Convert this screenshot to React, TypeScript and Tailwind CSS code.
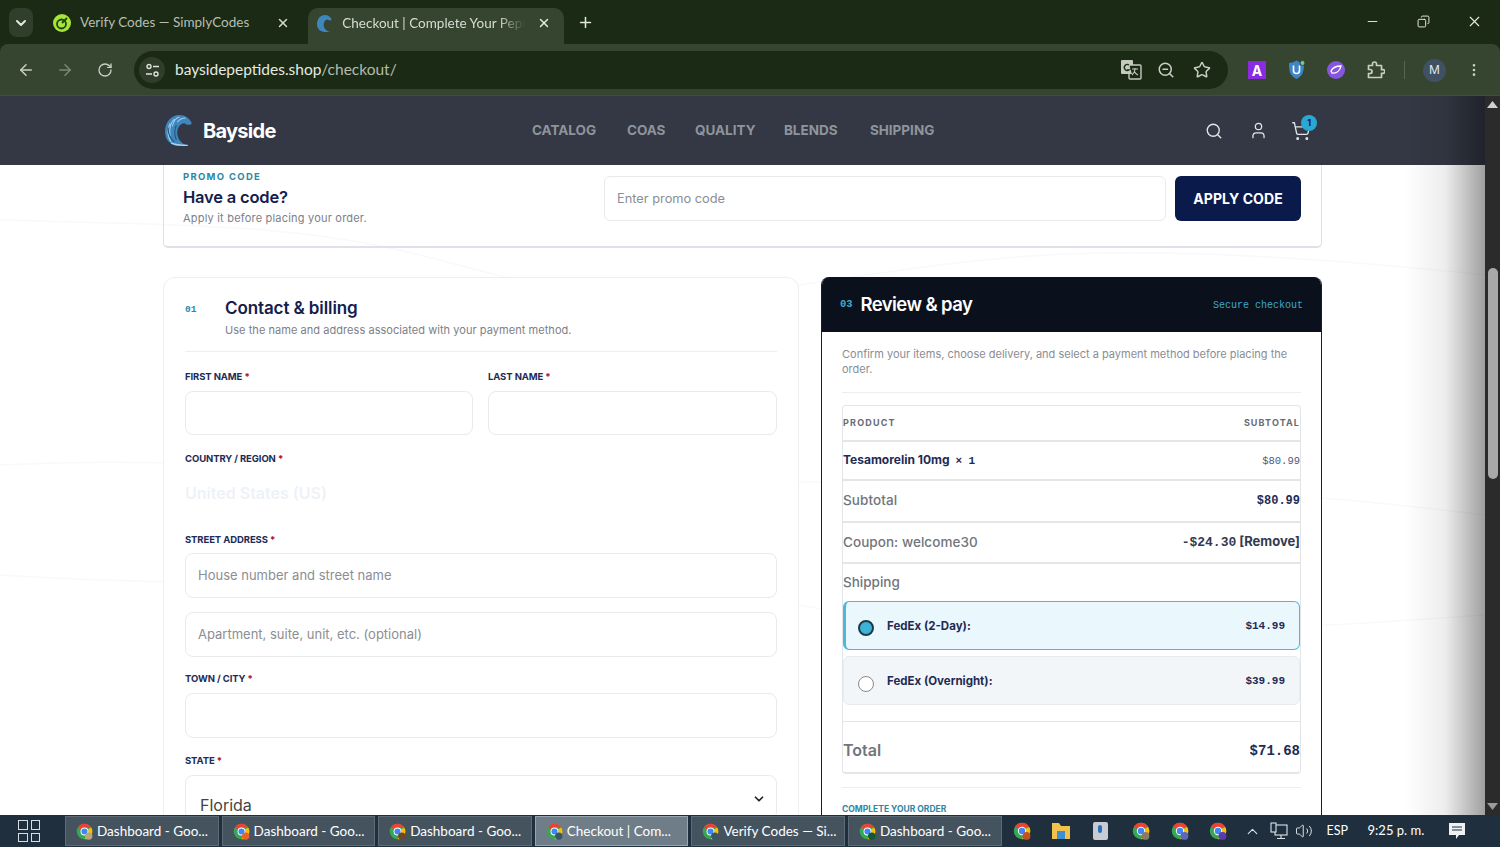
import React from "react";
import { ArrowLeft, ArrowRight, RotateCw, Search, Star, MoreVertical, X, Plus, ChevronDown, Minus, User, ShoppingCart, ChevronUp, Volume2, Copy, ZoomOut } from "lucide-react";

function ChromeIcon({ badge, size = 18 }: { badge: string; size?: number }) {
  return (
    <svg width={size} height={size} viewBox="0 0 24 24" className="shrink-0">
      <circle cx="12" cy="12" r="11" fill="#34a853" />
      <path d="M12 1a11 11 0 0 1 9.530 5.500H12a5.500 5.500 0 0 0-4.760 2.750L2.470 6.500A11 11 0 0 1 12 1z" fill="#ea4335" />
      <path d="M21.530 6.500A11 11 0 0 1 12 23l4.760-8.250A5.500 5.500 0 0 0 16.760 9.250z" fill="#fbbc04" />
      <circle cx="12" cy="12" r="5.600" fill="#fff" />
      <circle cx="12" cy="12" r="4.300" fill="#4285f4" />
      <circle cx="18" cy="18.500" r="5.200" fill={badge} />
    </svg>
  );
}

function WaveLogo({ size = 30, detail = true }: { size?: number; detail?: boolean }) {
  return (
    <svg width={size * 0.9} height={size} viewBox="0 0 27 30" className="shrink-0">
      <path d="M14 0C6 0 0 7 0 16c0 8 5 14 14 14h9c-8-2-12-8-11-15 1-5 4-7 7-7 2 2 6 2 7 0C24 3 19 0 14 0z" fill="#3f86bd" />
      {detail && (
        <g fill="none">
          <path d="M5 8c-3 5-3 13 1 18M9 4C5 8 4 14 5 20M14 2c-4 1-6 5-7 9M20 3c-3 0-6 1-8 4" stroke="#9fd0ee" strokeWidth="1" />
          <path d="M3 12c0 6 2 11 6 14M11 10c-2 4-2 10 0 14" stroke="#24507a" strokeWidth="1" />
          <path d="M6 27c4 2.500 10 2.500 16 2.500" stroke="#a9d4ee" strokeWidth="1.200" />
        </g>
      )}
    </svg>
  );
}

function Label({ text }: { text: string }) {
  return (
    <div className="h-[14px] text-[9.5px] leading-[14px] font-bold text-[#1d2b55] tracking-[-0.1px] uppercase">
      {text} <span className="text-[#b3122e]">*</span>
    </div>
  );
}

function Field({ placeholder, className }: { placeholder?: string; className: string }) {
  return (
    <div className={"flex items-center rounded-lg border border-[#e8eaee] bg-white pl-[12px] text-[13px] text-[#8b8e93] " + className}>
      {placeholder}
    </div>
  );
}

function TaskButton({ title, badge, active }: { title: string; badge: string; active?: boolean }) {
  return (
    <div className={active
      ? "flex h-[30px] w-[153.6px] items-center gap-[4px] border border-[#9aa6af] bg-[#6f7d88] pl-[10px] text-[13.5px] whitespace-nowrap text-white"
      : "flex h-[30px] w-[153.6px] items-center gap-[4px] border border-[#5d6b77] bg-[#45535f] pl-[10px] text-[13.5px] whitespace-nowrap text-white"}>
      <ChromeIcon badge={badge} size={17} />
      <span>{title}</span>
    </div>
  );
}

export default function App() {
  return (
    <div className="flex h-[847px] w-[1500px] flex-col overflow-hidden bg-[#1a2a15] font-['Inter',sans-serif]">
      {/* tab strip */}
      <div className="flex h-[44px] shrink-0 items-end bg-[#1a2a15] font-['Lato',sans-serif] text-[13.5px]">
        <div className="mb-[7px] ml-[9px] flex h-[29px] w-[24px] items-center justify-center rounded-lg bg-[#303f2b] text-[#e4e8de]">
          <ChevronDown size={16} strokeWidth={3} />
        </div>
        <div className="mb-[7px] ml-[20px] flex h-[29px] w-[255px] items-center text-[#b6beb0]">
          <svg width="18" height="18" viewBox="0 0 18 18" className="shrink-0">
            <circle cx="9" cy="9" r="9" fill="#a6e636" />
            <circle cx="8.500" cy="10" r="4.500" fill="none" stroke="#24401c" strokeWidth="1.800" />
            <path d="M9 9l5-5" stroke="#24401c" strokeWidth="1.800" />
          </svg>
          <span className="ml-[9px] w-[190px] whitespace-nowrap">Verify Codes — SimplyCodes</span>
          <X size={14} strokeWidth={2.500} className="ml-[6px] text-[#d5dacf]" />
        </div>
        <div className="flex h-[36px] w-[256px] items-center rounded-t-[10px] bg-[#36452f] pb-[6px] pl-[9px] text-[#d7dcd2]">
          <WaveLogo size={17} detail={false} />
          <span className="ml-[10px] w-[183px] overflow-hidden whitespace-nowrap [mask-image:linear-gradient(to_right,black_85%,transparent)]">Checkout | Complete Your Pept</span>
          <X size={14} strokeWidth={2.500} className="ml-[12px] text-[#e6e9e2]" />
        </div>
        <Plus size={17} strokeWidth={2.200} className="mb-[13px] ml-[13px] text-[#e1e5dc]" />
        <div className="flex-1" />
        <div className="mb-[14px] flex items-center text-[#e8ebe4]">
          <Minus size={15} strokeWidth={1.500} className="mr-[37px]" />
          <Copy size={13} strokeWidth={1.800} className="mr-[36px] scale-x-[-1]" />
          <X size={17} strokeWidth={1.500} className="mr-[17px]" />
        </div>
      </div>
      {/* toolbar */}
      <div className="flex h-[52px] shrink-0 items-center rounded-t-[8px] border-b border-[#3f4f38] bg-[#36452f] pt-[1px] text-[#c9cfc3]">
        <ArrowLeft size={18} className="ml-[17px]" />
        <ArrowRight size={18} className="ml-[21px] text-[#7d8877]" />
        <RotateCw size={16} className="ml-[23px]" />
        <div className="ml-[21px] flex h-[38px] w-[1094px] items-center rounded-full bg-[#1a2a15]">
          <div className="ml-[5px] flex h-[26px] w-[26px] items-center justify-center rounded-full bg-[#2f3d2a]">
            <svg width="15" height="15" viewBox="0 0 15 15" fill="none" stroke="#dfe3da" strokeWidth="1.400">
              <circle cx="4" cy="3.500" r="2" /><path d="M8 3.500h6M1 11h6" /><circle cx="11" cy="11" r="2" />
            </svg>
          </div>
          <span className="ml-[10px] font-['Lato',sans-serif] text-[15.5px] text-[#e6e9e1]">baysidepeptides.shop<span className="text-[#b4bbad]">/checkout/</span></span>
          <div className="flex-1" />
          <svg width="21" height="20" viewBox="0 0 21 20" className="mr-[15px] shrink-0">
            <rect x="0" y="0" width="12" height="14" rx="1" fill="#c4cabd" />
            <rect x="8" y="5" width="12" height="14" rx="1" fill="#1a2a15" stroke="#c4cabd" strokeWidth="1.400" />
            <path d="M8 5l3 9H8z" fill="#c4cabd" />
            <path d="M8 5a3 3 0 1 0 0 5h-2" fill="none" stroke="#1a2a15" strokeWidth="1.300" />
            <path d="M11 9h6M14 8v1c0 3-2 5-3 6M13 11c1 2 2 3 4 4" fill="none" stroke="#c4cabd" strokeWidth="1.100" />
          </svg>
          <ZoomOut size={18} className="mr-[18px]" />
          <Star size={18} className="mr-[17px]" />
        </div>
        <div className="ml-[20px] flex h-[18px] w-[18px] items-center justify-center bg-[#8a2be2] text-[14px] font-bold text-white">A</div>
        <svg width="18" height="20" viewBox="0 0 18 20" className="ml-[22px] shrink-0">
          <path d="M1 3c3 0 5-1 7.500-2.500C11 2 13 3 16 3c0 8-1 13-7.500 16C2 16 1 11 1 3z" fill="#3e86c9" />
          <path d="M5.500 5.500v5a3 3 0 0 0 6 0v-5" fill="none" stroke="#fff" strokeWidth="1.600" />
          <circle cx="14.500" cy="3" r="2.500" fill="#6fc8a0" stroke="#36452f" />
        </svg>
        <div className="ml-[21px] flex h-[18px] w-[18px] items-center justify-center rounded-full bg-[#8656e0]">
          <svg width="12" height="10" viewBox="0 0 12 10"><path d="M1 6c2-4 6-5 10-5-1 4-4 8-9 7z" fill="none" stroke="#fff" strokeWidth="1.300" /></svg>
        </div>
        <svg width="18" height="18" viewBox="0 0 18 18" fill="none" stroke="#c9cfc3" strokeWidth="1.700" strokeLinejoin="round" className="ml-[22px] shrink-0">
          <path d="M1.500 4.500h4V3a2 2 0 0 1 4 0v1.500h5v4.200H16a1.800 1.800 0 0 1 0 3.600h-1.500v4.200h-13v-4H3a2 2 0 0 0 0-4H1.500z" />
        </svg>
        <div className="ml-[19px] h-[18px] w-px bg-[#57664f]" />
        <div className="ml-[18px] flex h-[23px] w-[23px] items-center justify-center rounded-full bg-[#3f5163] text-[12px] text-[#dfe6ee]">M</div>
        <MoreVertical size={16} className="ml-[20px]" />
      </div>
      {/* page */}
      <div className="flex h-[719px] shrink-0">
        <div className="relative flex w-[1485px] flex-col overflow-hidden">
          <div className="flex h-[69px] shrink-0 items-center bg-[#333844] pl-[165px]">
            <WaveLogo size={31} />
            <span className="ml-[10px] w-[329px] text-[20px] font-bold tracking-[-0.7px] text-white">Bayside</span>
            <div className="flex text-[13.5px] font-bold text-[#8f949c]">
              <span className="w-[95px]">CATALOG</span>
              <span className="w-[68px]">COAS</span>
              <span className="w-[89px]">QUALITY</span>
              <span className="w-[86px]">BLENDS</span>
              <span>SHIPPING</span>
            </div>
            <div className="ml-[271px] flex items-center text-[#e3e5e8]">
              <Search size={18} strokeWidth={1.800} />
              <User size={19} strokeWidth={1.600} className="ml-[26px]" />
              <div className="relative ml-[23px]">
                <ShoppingCart size={20} strokeWidth={1.600} />
                <div className="absolute right-[-6px] top-[-6px] flex h-[16px] w-[16px] items-center justify-center rounded-full bg-[#2aa8d3] text-[9px] font-bold text-[#123]">1</div>
              </div>
            </div>
          </div>
          <div className="relative flex-1 overflow-hidden bg-white pl-[163px]">
            <svg className="absolute left-0 top-0" width="1485" height="650" fill="none" stroke="#f8f9fa" strokeWidth="1.500">
              <path d="M0 55C200 60 300 60 420 90S600 150 800 120 1100 70 1485 110" />
              <path d="M0 300C200 290 350 310 500 320S1000 290 1485 350" />
              <path d="M0 410C300 430 600 400 800 440S1200 470 1485 450" />
            </svg>
            <div className="relative w-[1159px]">
              {/* promo */}
              <div className="flex h-[83px] rounded-b-[5px] border-x border-b-2 border-[#dfe1e8] pl-[19px]">
                <div className="w-[420px]">
                  <div className="mt-[6px] h-[12px] text-[9.5px] leading-[12px] font-bold tracking-[1.300px] text-[#2d87a6]">PROMO CODE</div>
                  <div className="mt-[2px] h-[24px] text-[16.5px] leading-[24px] font-semibold tracking-[-0.2px] text-[#12204d]">Have a code?</div>
                  <div className="mt-[1px] text-[11px] leading-[16px] tracking-[0.2px] text-[#7c8088]">Apply it before placing your order.</div>
                </div>
                <div className="ml-[1px] mt-[11px] flex h-[45px] w-[562px] items-center rounded-md border border-[#e8eaee] bg-white pl-[12px] text-[12.8px] text-[#8b8e93]">Enter promo code</div>
                <div className="ml-[9px] mt-[11px] flex h-[45px] w-[126px] items-center justify-center rounded-md bg-[#0a1a4a] pb-[1px] text-[14px] font-bold tracking-[0.1px] text-white">APPLY CODE</div>
              </div>
              <div className="mt-[29px] flex gap-[22px]">
                {/* left */}
                <div className="h-[600px] w-[636px] shrink-0 rounded-xl border border-[#eceef2] bg-white px-[21px]">
                  <div className="flex h-[74px] border-b border-[#eceef0]">
                    <span className="mt-[26px] w-[40px] font-['Liberation_Mono',monospace] text-[9.5px] font-bold leading-[12px] text-[#2d87a6]">01</span>
                    <div>
                      <div className="mt-[18px] h-[24px] text-[17px] leading-[24px] font-semibold tracking-[-0.1px] text-[#12204d]">Contact &amp; billing</div>
                      <div className="mt-[2px] text-[11px] leading-[16px] text-[#7c8088] tracking-[0.05px]">Use the name and address associated with your payment method.</div>
                    </div>
                  </div>
                  <div className="mt-[18px] flex gap-[15px]">
                    <div>
                      <Label text="First name" />
                      <Field className="mt-[7px] h-[44px] w-[288px]" />
                    </div>
                    <div>
                      <Label text="Last name" />
                      <Field className="mt-[7px] h-[44px] w-[289px]" />
                    </div>
                  </div>
                  <div className="mt-[17px]"><Label text="Country / Region" /></div>
                  <div className="mt-[15px] h-[24px] text-[16px] leading-[24px] font-semibold text-[#eef2f7]">United States (US)</div>
                  <div className="mt-[28px]"><Label text="Street address" /></div>
                  <Field className="mt-[6px] h-[45px]" placeholder="House number and street name" />
                  <Field className="mt-[14px] h-[45px]" placeholder="Apartment, suite, unit, etc. (optional)" />
                  <div className="mt-[15px]"><Label text="Town / City" /></div>
                  <Field className="mt-[7px] h-[45px]" />
                  <div className="mt-[16px]"><Label text="State" /></div>
                  <div className="mt-[7px] flex h-[45px] items-center justify-between rounded-lg border border-[#e8eaee] pl-[14px] pr-[10px]">
                    <span className="mt-[14px] text-[16px] text-[#444]">Florida</span>
                    <ChevronDown size={14} strokeWidth={3} className="mt-[3px] text-[#222]" />
                  </div>
                </div>
                {/* right */}
                <div className="h-[600px] w-[501px] shrink-0 overflow-hidden rounded-t-lg border-x border-[#10203a] bg-white">
                  <div className="flex h-[55px] items-center bg-[#0a111c] pl-[18px] pr-[18px] pt-[1px]">
                    <span className="font-['Liberation_Mono',monospace] text-[10.5px] font-bold text-[#3fa9cf]">03</span>
                    <span className="ml-[8px] text-[18.5px] font-semibold tracking-[-0.6px] text-white">Review &amp; pay</span>
                    <div className="flex-1" />
                    <span className="font-['Liberation_Mono',monospace] text-[10px] text-[#3fa9cf]">Secure checkout</span>
                  </div>
                  <div className="px-[20px]">
                    <div className="h-[61px] border-b border-[#eceef0] pt-[15px] text-[11px] leading-[15px] text-[#8a8d93]">Confirm your items, choose delivery, and select a payment method before placing the order.</div>
                    <div className="mt-[12px] h-[369px] rounded-[4px] border border-b-2 border-[#e3e5e9]">
                      <div className="flex h-[36px] items-center justify-between border-b-2 border-[#e3e5e9] text-[9px] font-bold tracking-[1.200px] text-[#676b73]">
                        <span>PRODUCT</span><span className="tracking-[1.100px]">SUBTOTAL</span>
                      </div>
                      <div className="flex h-[39px] items-center justify-between border-b-2 border-[#e3e5e9]">
                        <span className="text-[12px] font-bold text-[#1d2b55]">Tesamorelin 10mg <span className="ml-[3px] font-['Liberation_Mono',monospace] text-[11px]">× 1</span></span>
                        <span className="mt-[2px] font-['Liberation_Mono',monospace] text-[10.5px] text-[#50597a]">$80.99</span>
                      </div>
                      <div className="flex h-[42px] items-center justify-between border-b-2 border-[#e3e5e9]">
                        <span className="mt-[-2px] text-[13.5px] font-medium tracking-[0.1px] text-[#71757c]">Subtotal</span>
                        <span className="font-['Liberation_Mono',monospace] text-[12px] font-bold text-[#1d2b55]">$80.99</span>
                      </div>
                      <div className="flex h-[41px] items-center justify-between border-b-2 border-[#e3e5e9]">
                        <span className="text-[13.5px] font-medium tracking-[0.05px] text-[#71757c]">Coupon: welcome30</span>
                        <span className="text-[13px] font-bold text-[#333a4e]"><span className="font-['Liberation_Mono',monospace]">-$24.30</span> [Remove]</span>
                      </div>
                      <div className="flex h-[37px] items-center text-[13.5px] font-medium text-[#71757c]">Shipping</div>
                      <div className="flex h-[49px] items-center rounded-md border border-l-[3px] border-[#4db8da] bg-[#eaf8fd] pl-[12px] pr-[14px]">
                        <span className="mt-[5px] h-[16px] w-[16px] rounded-full border-2 border-[#1d3a4a] bg-[#3fb3d7]" />
                        <span className="ml-[13px] mt-[2px] text-[11.5px] font-bold text-[#1d2b55]">FedEx (2-Day):</span>
                        <div className="flex-1" />
                        <span className="mt-[1px] font-['Liberation_Mono',monospace] text-[11px] font-bold text-[#1d2b55]">$14.99</span>
                      </div>
                      <div className="mt-[6px] flex h-[49px] items-center rounded-md border border-[#e8eaee] bg-[#f3f6f8] pl-[14px] pr-[14px]">
                        <span className="mt-[6px] h-[16px] w-[16px] rounded-full border border-[#8a8a8a] bg-white" />
                        <span className="ml-[13px] mt-[2px] text-[11.5px] font-bold text-[#1d2b55]">FedEx (Overnight):</span>
                        <div className="flex-1" />
                        <span className="mt-[1px] font-['Liberation_Mono',monospace] text-[11px] font-bold text-[#1d2b55]">$39.99</span>
                      </div>
                      <div className="mt-[16px] flex h-[50px] items-center justify-between border-t border-[#e3e5e9] pt-[6px]">
                        <span className="text-[16px] font-semibold text-[#71757c]">Total</span>
                        <span className="mt-[4px] font-['Liberation_Mono',monospace] text-[14px] font-bold text-[#1d2b55]">$71.68</span>
                      </div>
                    </div>
                    <div className="mt-[13px] border-t border-[#eceef0] pt-[15px] text-[8.5px] font-bold text-[#2d87a6]">COMPLETE YOUR ORDER</div>
                  </div>
                </div>
              </div>
            </div>
          </div>
          {/* soft shade at the right edge of the page */}
          <div className="pointer-events-none absolute right-0 top-0 h-[719px] w-[80px] bg-gradient-to-r from-transparent via-[#00000012] to-[#00000060]" />
        </div>
        {/* scrollbar */}
        <div className="flex w-[15px] flex-col items-center bg-[#2b2b2b] py-[5px]">
          <svg width="11" height="7" viewBox="0 0 11 7" className="shrink-0"><path d="M5.500 0L11 7H0z" fill="#cfcfcf" /></svg>
          <div className="mt-[160px] h-[211px] w-[10px] shrink-0 rounded-full bg-[#a8a8a8]" />
          <div className="flex-1" />
          <svg width="11" height="7" viewBox="0 0 11 7" className="shrink-0"><path d="M5.500 7L11 0H0z" fill="#9a9a9a" /></svg>
        </div>
      </div>
      {/* taskbar */}
      <div className="flex h-[32px] shrink-0 items-center bg-[#1f2f3d] font-['Lato',sans-serif] text-white">
        <div className="ml-[18px] grid h-[22px] w-[22px] shrink-0 grid-cols-2 gap-[3px]">
          <span className="border border-[#d8dde2]" /><span className="border border-[#d8dde2]" />
          <span className="border border-[#d8dde2]" /><span className="border border-[#d8dde2]" />
        </div>
        <div className="ml-[25px] flex gap-[3px]">
          <TaskButton title="Dashboard - Goo..." badge="#b9a77a" />
          <TaskButton title="Dashboard - Goo..." badge="#e8632a" />
          <TaskButton title="Dashboard - Goo..." badge="#6b4a2a" />
          <TaskButton title="Checkout | Com..." badge="#3a5568" active />
          <TaskButton title="Verify Codes — Si..." badge="#3a5568" />
          <TaskButton title="Dashboard - Goo..." badge="#0e5a3a" />
        </div>
        <div className="ml-[11px]"><ChromeIcon badge="#c2521f" /></div>
        <svg width="20" height="18" viewBox="0 0 20 18" className="ml-[20px] shrink-0">
          <path d="M1 1h7l2 3h9v13H1z" fill="#f0c14b" />
          <rect x="6" y="9" width="8" height="8" fill="#3d8fd1" />
        </svg>
        <div className="ml-[22px] flex h-[18px] w-[15px] items-start justify-center rounded-[2px] bg-[#c8ccd2] pt-[3px]">
          <span className="h-[8px] w-[4px] rounded-full bg-[#2a70c0]" />
        </div>
        <div className="ml-[24px]"><ChromeIcon badge="#8a7a66" /></div>
        <div className="ml-[21px]"><ChromeIcon badge="#5a66c0" /></div>
        <div className="ml-[20px]"><ChromeIcon badge="#5a3ab0" /></div>
        <ChevronUp size={17} strokeWidth={1.600} className="ml-[17px] text-[#dfe3e7]" />
        <svg width="18" height="18" viewBox="0 0 18 18" fill="none" stroke="#dfe3e7" strokeWidth="1.100" className="ml-[9px] shrink-0">
          <rect x="5" y="3" width="12" height="10" /><rect x="1" y="1" width="5" height="9" fill="#1f2f3d" /><path d="M11 13v3M7 16.500h8" />
        </svg>
        <Volume2 size={18} strokeWidth={1.300} className="ml-[7px] text-[#dfe3e7]" />
        <span className="ml-[14px] w-[26px] text-[12.5px]">ESP</span>
        <span className="ml-[15px] w-[65px] text-[13px] whitespace-nowrap">9:25 p. m.</span>
        <svg width="18" height="18" viewBox="0 0 18 18" className="ml-[15px] shrink-0">
          <path d="M1 1h16v12h-6l-3 4v-4H1z" fill="#eef0f2" />
          <path d="M4 5h10M4 8h10" stroke="#1f2f3d" strokeWidth="1.200" />
        </svg>
      </div>
    </div>
  );
}
